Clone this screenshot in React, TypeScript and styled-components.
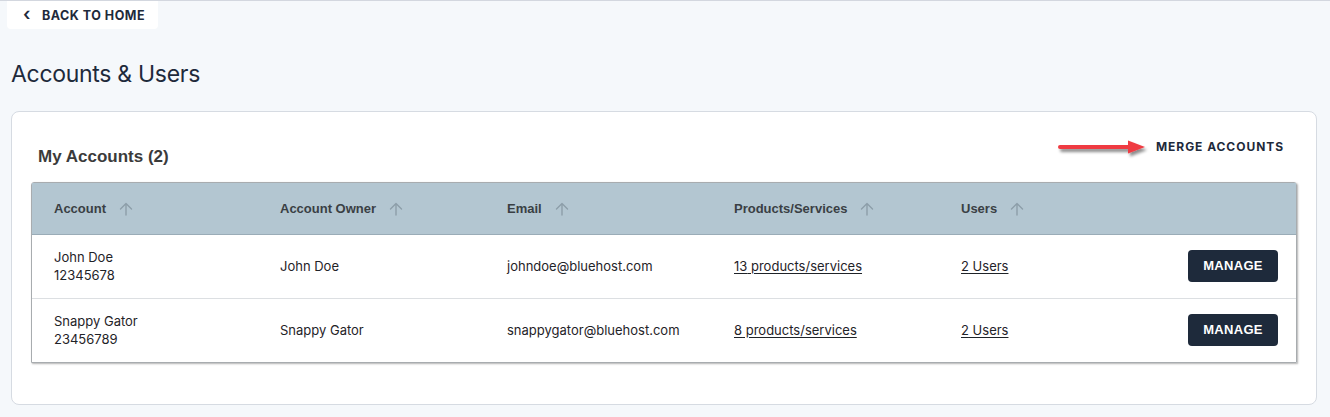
import styled, { createGlobalStyle } from "styled-components";

const GlobalStyle = createGlobalStyle`
  html, body {
    margin: 0;
    padding: 0;
    background: #f5f8fb;
  }
  body {
    font-family: Inter, "Liberation Sans", Arial, sans-serif;
    color: #1e2a3b;
  }
`;

type Account = {
  name: string;
  id: string;
  owner: string;
  email: string;
  products: number;
  users: number;
};

const accounts: Account[] = [
  {
    name: "John Doe",
    id: "12345678",
    owner: "John Doe",
    email: "johndoe@bluehost.com",
    products: 13,
    users: 2,
  },
  {
    name: "Snappy Gator",
    id: "23456789",
    owner: "Snappy Gator",
    email: "snappygator@bluehost.com",
    products: 8,
    users: 2,
  },
];

const columns = ["Account", "Account Owner", "Email", "Products/Services", "Users"];

const SortArrow = () => (
  <svg width="16" height="16" viewBox="0 0 16 16" fill="none">
    <path
      d="M8 14V2.5M2.5 8L8 2.5L13.5 8"
      stroke="#8d9ea9"
      strokeWidth="1.4"
      strokeLinecap="round"
      strokeLinejoin="round"
    />
  </svg>
);

const RedArrow = () => (
  <svg width="100" height="24" viewBox="0 0 100 24">
    <defs>
      <filter id="shadow" x="-20%" y="-60%" width="140%" height="220%">
        <feDropShadow dx="2" dy="3" stdDeviation="1.8" floodColor="#000" floodOpacity="0.45" />
      </filter>
    </defs>
    <g filter="url(#shadow)">
      <path d="M4 10H74" stroke="#ef3b42" strokeWidth="4" strokeLinecap="round" />
      <path d="M72 3.5L89 10L72 16.5Z" fill="#ef3b42" />
    </g>
  </svg>
);

const App = () => {
  return (
    <>
      <GlobalStyle />
      <Page>
        <BackButton>
          <Chevron>‹</Chevron>
          BACK TO HOME
        </BackButton>
        <PageTitle>Accounts &amp; Users</PageTitle>

        <Card>
          <CardHeader>
            <CardTitle>My Accounts (2)</CardTitle>
            <MergeBox>
              <RedArrow />
              <MergeLink>MERGE ACCOUNTS</MergeLink>
            </MergeBox>
          </CardHeader>

          <Table>
            <HeadRow>
              {columns.map((c) => (
                <HeadCell key={c}>
                  {c}
                  <SortArrow />
                </HeadCell>
              ))}
              <HeadCell />
            </HeadRow>
            {accounts.map((a) => (
              <BodyRow key={a.id}>
                <Cell>
                  <Stack>
                    <span>{a.name}</span>
                    <span>{a.id}</span>
                  </Stack>
                </Cell>
                <Cell>{a.owner}</Cell>
                <Cell>{a.email}</Cell>
                <Cell>
                  <TextLink>{a.products} products/services</TextLink>
                </Cell>
                <Cell>
                  <TextLink>{a.users} Users</TextLink>
                </Cell>
                <ActionCell>
                  <ManageButton>MANAGE</ManageButton>
                </ActionCell>
              </BodyRow>
            ))}
          </Table>
        </Card>
      </Page>
    </>
  );
};

const Page = styled.div`
  border-top: 1px solid #d3d7df;
  padding: 0 13px 0 11px;
  min-height: 416px;
  box-sizing: border-box;
`;

const BackButton = styled.div`
  display: inline-flex;
  align-items: center;
  gap: 11px;
  margin-left: -4px;
  height: 28px;
  padding: 0 13px 0 16px;
  background: #fff;
  border-radius: 0 0 4px 4px;
  font-size: 12.5px;
  font-weight: 700;
  letter-spacing: 0.5px;
  color: #1e2a3b;
`;

const Chevron = styled.span`
  font-size: 18px;
  font-weight: 600;
  line-height: 1;
  margin-top: -3px;
`;

const PageTitle = styled.h1`
  margin: 30px 0 22px;
  font-size: 23px;
  font-weight: 400;
  letter-spacing: -0.3px;
  color: #1e2a3b;
  line-height: 30px;
`;

const Card = styled.div`
  background: #fff;
  border: 1px solid #d6dbe2;
  border-radius: 8px;
  padding: 0 19px 41px 19px;
`;

const CardHeader = styled.div`
  display: flex;
  justify-content: space-between;
  align-items: flex-start;
  padding: 22px 13px 15px 7px;
`;

const CardTitle = styled.h2`
  margin: 13px 0 0;
  font-family: "Liberation Sans", Arial, sans-serif;
  font-size: 17px;
  font-weight: 700;
  color: #3b3b3b;
  line-height: 20px;
`;

const MergeBox = styled.div`
  display: flex;
  align-items: center;
  margin-top: 3px;
`;

const MergeLink = styled.span`
  font-size: 12px;
  font-weight: 700;
  letter-spacing: 0.95px;
  color: #1e2a3b;
  margin-top: -5px;
`;

const Table = styled.div`
  border: 1px solid #a8acaf;
  box-shadow: 1px 1px 2px rgba(0, 0, 0, 0.3);
  border-radius: 3px 3px 0 0;
`;

const Row = styled.div`
  display: grid;
  grid-template-columns: 226px 227px 227px 227px 227px 1fr;
`;

const HeadRow = styled(Row)`
  background: #b3c6d1;
  height: 51px;
  border-bottom: 1px solid #9aacb7;
`;

const HeadCell = styled.div`
  display: flex;
  align-items: center;
  gap: 12px;
  padding-left: 22px;
  font-family: "Liberation Sans", Arial, sans-serif;
  font-size: 13px;
  font-weight: 700;
  color: #3a3f44;
`;

const BodyRow = styled(Row)`
  height: 63px;
  & + & {
    border-top: 1px solid #dcdfe2;
  }
`;

const Cell = styled.div`
  display: flex;
  align-items: center;
  padding-left: 22px;
  padding-bottom: 2px;
  font-size: 13px;
  color: #1f2328;
`;

const Stack = styled.div`
  display: flex;
  flex-direction: column;
  gap: 2px;
  line-height: 16px;
`;

const TextLink = styled.a`
  color: #1f2328;
  text-decoration: underline;
  text-underline-offset: 2px;
  cursor: pointer;
`;

const ActionCell = styled(Cell)`
  justify-content: flex-end;
  padding-right: 20px;
`;

const ManageButton = styled.button`
  width: 90px;
  height: 32px;
  border: none;
  border-radius: 4px;
  background: #1e2a3b;
  color: #fff;
  font-family: "Liberation Sans", Arial, sans-serif;
  font-size: 13px;
  font-weight: 700;
  letter-spacing: 0.3px;
  cursor: pointer;
`;

export default App;
